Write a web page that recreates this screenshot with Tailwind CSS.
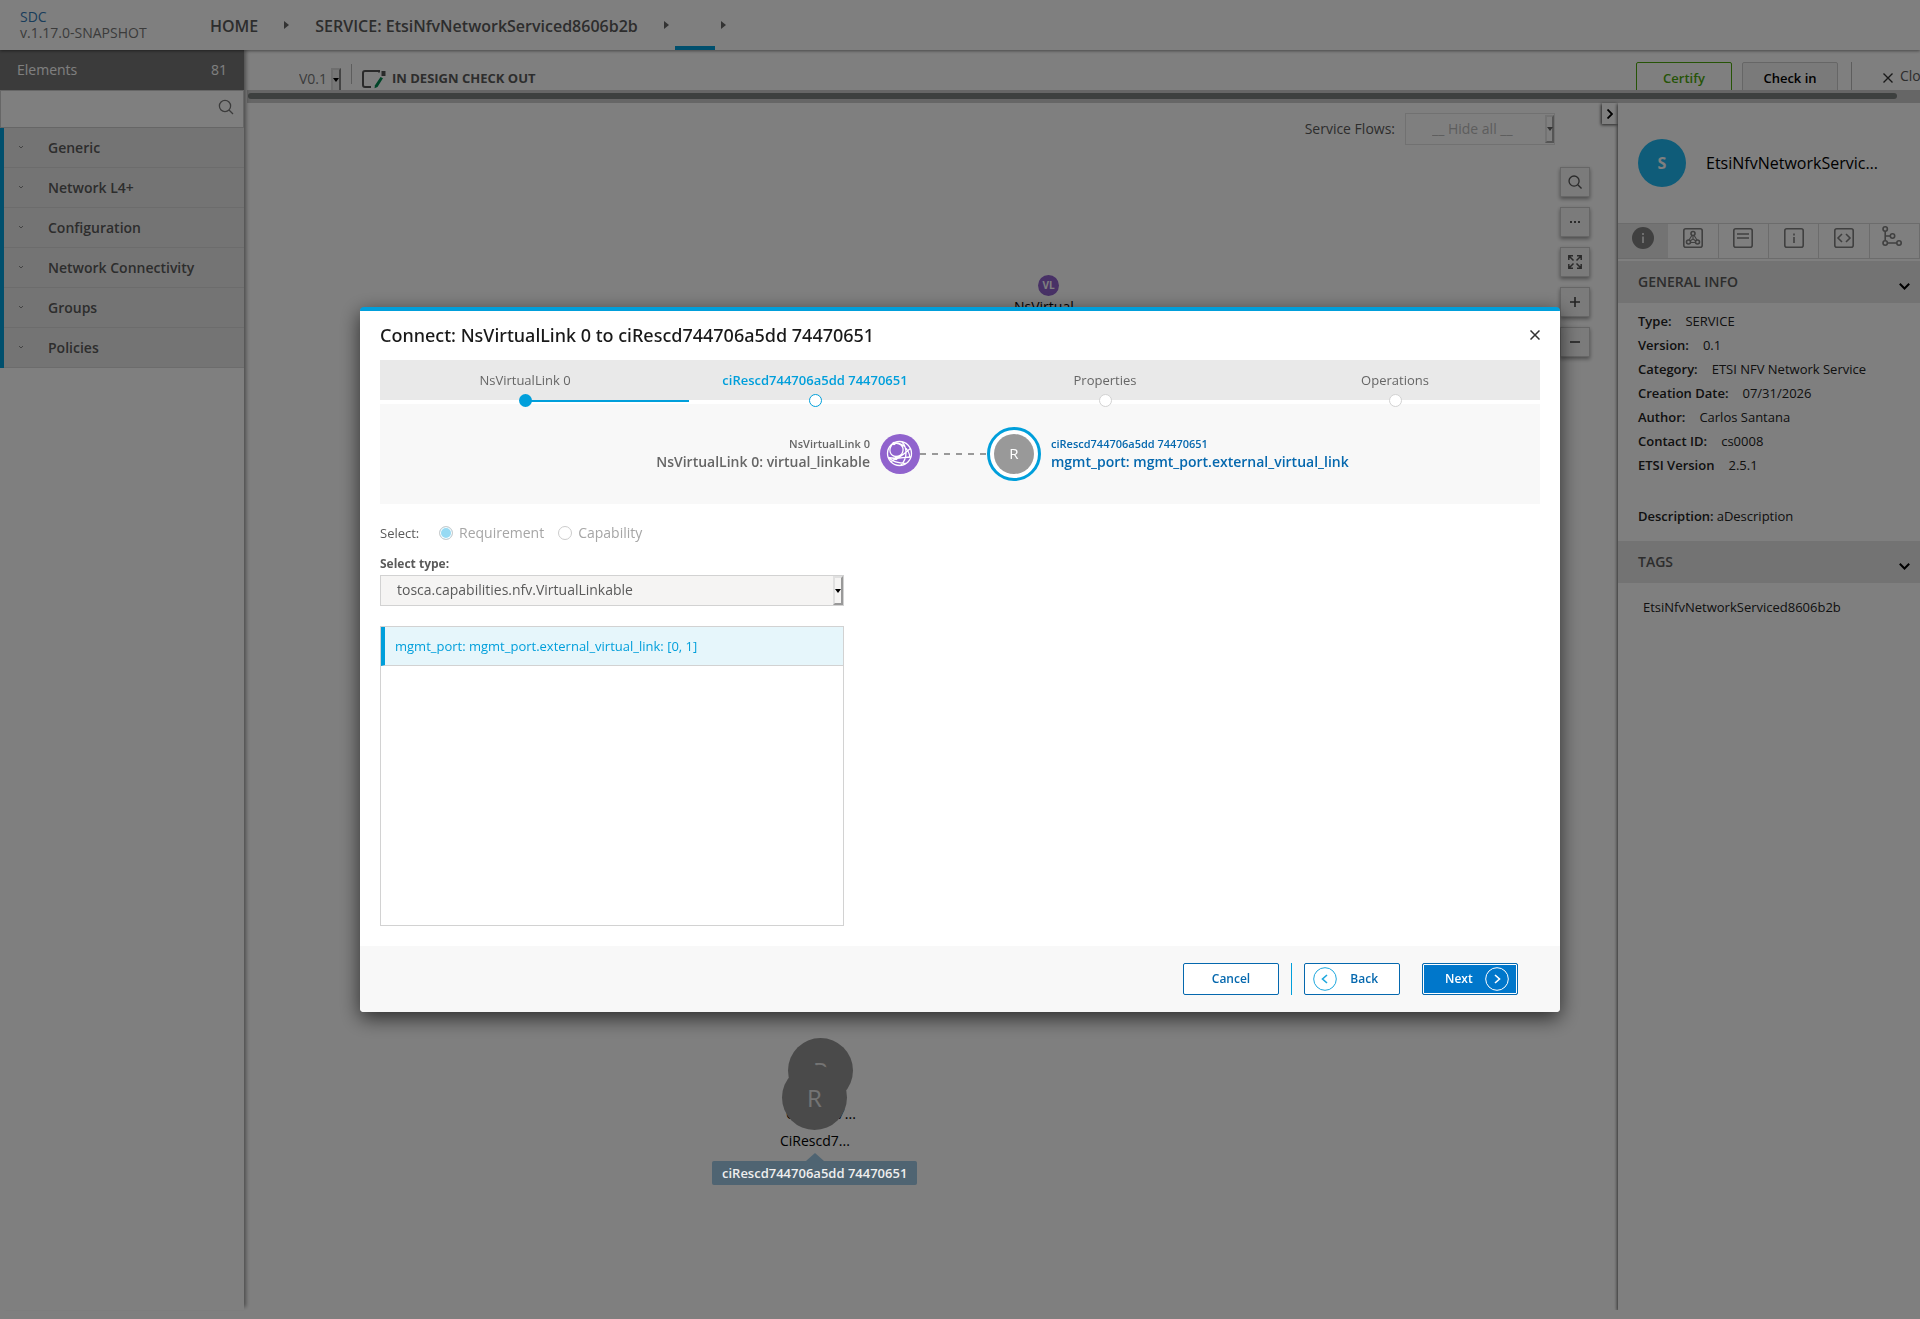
<!DOCTYPE html>
<html lang="en">
<head>
  <meta charset="UTF-8" />
  <meta name="viewport" content="width=device-width, initial-scale=1" />
  <title>SDC - Composition</title>
  <script src="https://cdn.jsdelivr.net/npm/@tailwindcss/browser@4"></script>
</head>
<body class="bg-white font-['Open_Sans',sans-serif] text-sm text-[#5a5a5a] h-screen flex flex-col overflow-hidden">

  <!-- Top navigation -->
  <header class="relative z-10 h-[50px] shrink-0 flex items-center bg-white shadow-[0_1px_3px_rgba(0,0,0,0.45)]">
    <div class="w-[210px] pl-5 leading-4">
      <a href="#" class="block text-[#337ab7]">SDC</a>
      <div class="text-[#777]">v.1.17.0-SNAPSHOT</div>
    </div>
    <nav class="flex items-center h-full text-base font-semibold">
      <a href="#" class="pt-px">HOME</a>
      <span class="w-[57px] flex justify-center"><svg class="w-[5px] h-2" viewBox="0 0 5 8"><path d="M0 0l5 4-5 4z" fill="#666" /></svg></span>
      <a href="#" class="pt-px">SERVICE: EtsiNfvNetworkServiced8606b2b</a>
      <span class="w-[37px] pl-[26px]"><svg class="w-[5px] h-2" viewBox="0 0 5 8"><path d="M0 0l5 4-5 4z" fill="#666" /></svg></span>
      <span class="w-10 h-full border-b-4 border-[#009fdb]"></span>
      <span class="pl-[6px]"><svg class="w-[5px] h-2" viewBox="0 0 5 8"><path d="M0 0l5 4-5 4z" fill="#666" /></svg></span>
    </nav>
  </header>

  <div class="flex flex-1 min-h-0 pb-[9px]">
    <!-- Palette -->
    <aside class="relative w-[244px] shrink-0 bg-white shadow-[3px_-2px_4px_-1px_rgba(0,0,0,0.4)]">
      <div class="h-10 px-[17px] flex items-center justify-between bg-[#777] text-white pb-px">
        <span>Elements</span><span>81</span>
      </div>
      <div class="relative h-[38px] border border-[#ccc]">
        <input type="text" aria-label="Search elements" class="w-full h-full pl-3 pr-10 outline-none" />
        <svg class="absolute right-[9px] top-2 w-4 h-4" viewBox="0 0 16 16" fill="none" stroke="#777" stroke-width="1.3"><circle cx="7" cy="7" r="5.6" /><path d="M11 11l4 4" /></svg>
      </div>
      <ul class="border-l-4 border-[#009fdb] font-semibold">
        <li class="h-10 flex items-center bg-[#e9e9e9] border-b border-[#d8d8d8]"><svg class="ml-[15px] mr-[25px] w-1 h-[3px]" viewBox="0 0 4 3" fill="none" stroke="#888"><path d="M0 0l2 2 2-2" /></svg>Generic</li>
        <li class="h-10 flex items-center bg-[#e9e9e9] border-b border-[#d8d8d8]"><svg class="ml-[15px] mr-[25px] w-1 h-[3px]" viewBox="0 0 4 3" fill="none" stroke="#888"><path d="M0 0l2 2 2-2" /></svg>Network L4+</li>
        <li class="h-10 flex items-center bg-[#e9e9e9] border-b border-[#d8d8d8]"><svg class="ml-[15px] mr-[25px] w-1 h-[3px]" viewBox="0 0 4 3" fill="none" stroke="#888"><path d="M0 0l2 2 2-2" /></svg>Configuration</li>
        <li class="h-10 flex items-center bg-[#e9e9e9] border-b border-[#d8d8d8]"><svg class="ml-[15px] mr-[25px] w-1 h-[3px]" viewBox="0 0 4 3" fill="none" stroke="#888"><path d="M0 0l2 2 2-2" /></svg>Network Connectivity</li>
        <li class="h-10 flex items-center bg-[#e9e9e9] border-b border-[#d8d8d8]"><svg class="ml-[15px] mr-[25px] w-1 h-[3px]" viewBox="0 0 4 3" fill="none" stroke="#888"><path d="M0 0l2 2 2-2" /></svg>Groups</li>
        <li class="h-10 flex items-center bg-[#e9e9e9] border-b border-[#d8d8d8]"><svg class="ml-[15px] mr-[25px] w-1 h-[3px]" viewBox="0 0 4 3" fill="none" stroke="#888"><path d="M0 0l2 2 2-2" /></svg>Policies</li>
      </ul>
    </aside>

    <main class="flex-1 min-w-0 flex flex-col pl-[3px]">
      <!-- Workspace toolbar -->
      <div class="h-10 shrink-0 overflow-hidden">
        <div class="flex items-start pt-3 pl-[52px] w-[calc(100%+40px)]">
          <div class="flex items-start pt-[6px]">
            <select aria-label="Version" class="appearance-none w-8 leading-[22px] outline-none text-[#777]"><option>V0.1</option></select>
            <span aria-hidden="true" class="w-[10px] h-6 bg-[#eee] border-2 border-t-[#ddd] border-l-[#ddd] border-r-[#888] border-b-[#888] flex items-center justify-center"><svg class="w-[6px] h-1 shrink-0" viewBox="0 0 6 4"><path d="M0 0h6l-3 4z" fill="#000" /></svg></span>
          </div>
          <span class="ml-[10px] mt-[2px] h-5 w-px bg-[#bbb]"></span>
          <svg class="ml-[10px] mt-[8px] w-6 h-[19px]" viewBox="0 0 24 19" fill="none"><path d="M17 2.500V1H3Q1 1 1 3v12q0 2 2 2h6" stroke="#555" stroke-width="2" /><path d="M19.500 1h4v5h-4z" fill="#555" /><path d="M18.500 7l2.500 1.200-5.500 8.800-3 1.200.5-3z" fill="#008a50" /></svg>
          <span class="ml-[6px] mt-[7px] text-[13px] leading-[18px] font-bold">IN DESIGN CHECK OUT</span>
          <div class="ml-auto flex items-start text-[13px]">
            <button type="button" class="w-24 h-8 border border-[#4ca90c] rounded-xs text-[#4ca90c] font-semibold">Certify</button>
            <button type="button" class="ml-[10px] w-24 h-8 border border-[#ccc] bg-[#f5f5f5] rounded-xs text-black font-semibold">Check in</button>
            <span class="ml-[13px] h-8 w-px bg-[#bbb]"></span>
            <button type="button" class="ml-[31px] flex items-center gap-[7px] text-sm w-[77px] whitespace-nowrap leading-[28px]"><svg class="w-[10px] h-[10px] mt-[3px] shrink-0" viewBox="0 0 10 10" stroke="#333" stroke-width="1.4"><path d="M.5.500l9 9M9.500.500l-9 9" /></svg>Close</button>
          </div>
        </div>
      </div>
      <div class="h-[13px] shrink-0 bg-[#ccc] pt-[3px] pl-px pr-[23px]"><div class="h-[6px] rounded-full bg-[#7b807e]"></div></div>

      <div class="flex flex-1 min-h-0">
        <!-- Composition canvas -->
        <section class="relative flex-1 min-w-0">
          <div class="absolute right-[63px] top-[10px] flex items-center gap-[10px]">
            <label for="flows">Service Flows:</label>
            <span class="relative block w-[150px] h-8">
              <select id="flows" disabled class="appearance-none w-full h-full border border-[#e2e2e2] pl-[26px] text-[#bbb] opacity-100"><option>__ Hide all __</option></select>
              <span aria-hidden="true" class="absolute right-px top-[2px] w-[9px] h-7 border-2 border-t-[#e6e6e6] border-l-[#e6e6e6] border-r-[#aaa] border-b-[#aaa] flex items-center justify-center"><svg class="w-[6px] h-1 shrink-0" viewBox="0 0 6 4"><path d="M0 0h6l-3 4z" fill="#666" /></svg></span>
            </span>
          </div>
          <button type="button" aria-label="Toggle panel" class="absolute right-0 top-0 w-4 h-[21px] bg-white flex items-center justify-center shadow-[-1px_1px_3px_rgba(0,0,0,0.7)]"><svg class="w-[6px] h-[10px]" viewBox="0 0 6 10" fill="none" stroke="#000" stroke-width="1.8"><path d="M.5.500L5 5 .5 9.500" /></svg></button>

          <div class="absolute right-7 top-16 flex flex-col gap-[10px]">
            <button type="button" aria-label="Search" class="w-[30px] h-[30px] flex items-center justify-center bg-[#f6f6f6] border border-[#ccc] shadow-[0_2px_4px_rgba(0,0,0,0.4)]"><svg class="w-[14px] h-[14px]" viewBox="0 0 15 15" fill="none" stroke="#555" stroke-width="1.4"><circle cx="6.500" cy="6.500" r="5.400" /><path d="M10.500 10.500l4 4" /></svg></button>
            <button type="button" aria-label="More" class="w-[30px] h-[30px] flex items-center justify-center bg-[#f6f6f6] border border-[#ccc] shadow-[0_2px_4px_rgba(0,0,0,0.4)]"><svg class="w-[10px] h-[2px]" viewBox="0 0 10 2" fill="#555"><path d="M0 0h2v2H0zM4 0h2v2H4zM8 0h2v2H8z" /></svg></button>
            <button type="button" aria-label="Fit" class="w-[30px] h-[30px] flex items-center justify-center bg-[#f6f6f6] border border-[#ccc] shadow-[0_2px_4px_rgba(0,0,0,0.4)]"><svg class="w-[14px] h-[14px]" viewBox="0 0 14 14" fill="none" stroke="#555" stroke-width="1.500"><path d="M.8 5V.8H5M9 .8h4.200V5M13.200 9v4.200H9M5 13.200H.8V9M1 1l4.500 4.500M13 1L8.500 5.500M13 13L8.500 8.500M1 13l4.500-4.500" /></svg></button>
            <button type="button" aria-label="Zoom in" class="w-[30px] h-[30px] flex items-center justify-center bg-[#f6f6f6] border border-[#ccc] shadow-[0_2px_4px_rgba(0,0,0,0.4)]"><svg class="w-[10px] h-[10px]" viewBox="0 0 10 10" stroke="#444" stroke-width="1.600"><path d="M5 0v10M0 5h10" /></svg></button>
            <button type="button" aria-label="Zoom out" class="w-[30px] h-[30px] flex items-center justify-center bg-[#f6f6f6] border border-[#ccc] shadow-[0_2px_4px_rgba(0,0,0,0.4)]"><svg class="w-[10px] h-[10px]" viewBox="0 0 10 10" stroke="#444" stroke-width="1.600"><path d="M0 5h10" /></svg></button>
          </div>

          <!-- Graph nodes -->
          <div class="absolute left-[791px] top-[172px] w-[21px] h-[21px] rounded-full bg-[#9063cd] text-white text-[10px] font-bold flex items-center justify-center">VL</div>
          <div class="absolute left-[767px] top-[194px] text-black">NsVirtual...</div>
          <div class="absolute left-[539px] top-[1001px] text-black">CiRescd7...</div>
          <div class="absolute left-[541px] top-[935px] w-[65px] h-[65px] rounded-full bg-[#959595] text-[#e8e8e8] text-2xl flex items-center justify-center">R</div>
          <div class="absolute left-[535px] top-[962px] w-[65px] h-[65px] rounded-full bg-[#959595] text-[#e8e8e8] text-2xl flex items-center justify-center">R</div>
          <div class="absolute left-[533px] top-[1028px] text-black">CiRescd7...</div>
        </section>

        <!-- Details panel -->
        <aside class="w-[302px] shrink-0 bg-white text-[13px] text-[#222] shadow-[-1px_1px_3px_rgba(0,0,0,0.6)] relative [clip-path:inset(0_0_0_-6px)]">
          <div class="h-[120px] pl-5 flex items-center gap-5">
            <span class="w-12 h-12 rounded-full bg-[#1eb9f3] text-white text-base font-bold flex items-center justify-center">S</span>
            <span class="w-[172px] truncate text-base text-black">EtsiNfvNetworkServiced8606b2b</span>
          </div>
          <div class="grid grid-cols-6 h-9 border-y border-[#d8d8d8]">
            <button type="button" aria-label="General" class="flex justify-center pt-[3px] bg-[#e6e6e6]"><svg class="w-[22px] h-[22px]" viewBox="0 0 22 22"><circle cx="11" cy="11" r="11" fill="#808080" /><path d="M10 6h2v2h-2zM10 9.500h2V16h-2z" fill="#ddd" /></svg></button>
            <button type="button" aria-label="Composition" class="flex justify-center pt-1 border-r border-[#d8d8d8]"><svg class="w-5 h-5" viewBox="0 0 20 20" fill="none" stroke="#808080" stroke-width="1.600"><rect x=".8" y=".8" width="18.400" height="18.400" rx="2" /><circle cx="10" cy="5.500" r="2" /><circle cx="5.500" cy="14" r="2" /><circle cx="14.500" cy="14" r="2" /><path d="M9 7.300L6 12M11 7.300l3 4.700M7.500 14.500h5M10 7.500V11l-3 2M10 11l3 2" stroke-width="1.100" /></svg></button>
            <button type="button" aria-label="Deployment" class="flex justify-center pt-1 border-r border-[#d8d8d8]"><svg class="w-5 h-5" viewBox="0 0 20 20" fill="none" stroke="#808080" stroke-width="1.600"><rect x=".8" y=".8" width="18.400" height="18.400" rx="2" /><path d="M4 6h12M4 10h12" /></svg></button>
            <button type="button" aria-label="Information" class="flex justify-center pt-1 border-r border-[#d8d8d8]"><svg class="w-5 h-5" viewBox="0 0 20 20" fill="none" stroke="#808080" stroke-width="1.600"><rect x=".8" y=".8" width="18.400" height="18.400" rx="2" /><path d="M10 5.500v2M10 9v6" /></svg></button>
            <button type="button" aria-label="API" class="flex justify-center pt-1 border-r border-[#d8d8d8]"><svg class="w-5 h-5" viewBox="0 0 20 20" fill="none" stroke="#808080" stroke-width="1.600"><rect x=".8" y=".8" width="18.400" height="18.400" rx="2" /><path d="M8 6l-4 4 4 4M12 6l4 4-4 4" /></svg></button>
            <button type="button" aria-label="Dependencies" class="flex justify-center pt-[2px] pr-1 border-r border-[#d8d8d8]"><svg class="w-5 h-5" viewBox="0 0 20 20" fill="none" stroke="#808080" stroke-width="1.600"><circle cx="3.200" cy="3" r="2.200" /><circle cx="3.200" cy="17" r="2.200" /><circle cx="10.500" cy="10" r="2.200" /><circle cx="17" cy="17" r="2.200" /><path d="M3.200 5.200v9.600M5.400 17h9.400M3.500 10h4.800" /></svg></button>
          </div>
          <h2 class="mt-[2px] h-[42px] pl-5 pr-[10px] flex items-center justify-between bg-[#e6e6e6] text-sm font-semibold text-[#5a5a5a]">GENERAL INFO<svg class="w-[11px] h-[7px] mt-2" viewBox="0 0 11 7" fill="none" stroke="#000" stroke-width="2"><path d="M.8.800l4.700 4.700L10.200.8" /></svg></h2>
          <dl class="pt-[6px] pl-5 leading-[18px]">
            <div class="flex gap-[14px] py-[3px]"><dt class="font-semibold">Type:</dt><dd>SERVICE</dd></div>
            <div class="flex gap-[14px] py-[3px]"><dt class="font-semibold">Version:</dt><dd>0.1</dd></div>
            <div class="flex gap-[14px] py-[3px]"><dt class="font-semibold">Category:</dt><dd>ETSI NFV Network Service</dd></div>
            <div class="flex gap-[14px] py-[3px]"><dt class="font-semibold">Creation Date:</dt><dd>07/31/2026</dd></div>
            <div class="flex gap-[14px] py-[3px]"><dt class="font-semibold">Author:</dt><dd>Carlos Santana</dd></div>
            <div class="flex gap-[14px] py-[3px]"><dt class="font-semibold">Contact ID:</dt><dd>cs0008</dd></div>
            <div class="flex gap-[14px] py-[3px]"><dt class="font-semibold">ETSI Version</dt><dd>2.5.1</dd></div>
            <div class="flex gap-[3px] pt-[30px] pb-4"><dt class="font-semibold">Description:</dt><dd>aDescription</dd></div>
          </dl>
          <h2 class="h-[42px] pl-5 pr-[10px] flex items-center justify-between bg-[#e6e6e6] text-sm font-semibold text-[#5a5a5a]">TAGS<svg class="w-[11px] h-[7px] mt-2" viewBox="0 0 11 7" fill="none" stroke="#000" stroke-width="2"><path d="M.8.800l4.700 4.700L10.200.8" /></svg></h2>
          <p class="pt-[15px] pl-[25px]">EtsiNfvNetworkServiced8606b2b</p>
        </aside>
      </div>
    </main>
  </div>

  <!-- Connection wizard -->
  <div class="fixed inset-0 z-20 flex items-center justify-center bg-black/50">
    <div role="dialog" aria-labelledby="wizardTitle" class="w-[1200px] max-w-full bg-white rounded border-t-4 border-[#009fdb] shadow-[0_6px_20px_rgba(0,0,0,0.65)]">
      <div class="h-[49px] px-5 pb-[2px] flex items-center justify-between">
        <h1 id="wizardTitle" class="font-['Noto_Sans',sans-serif] text-lg text-[#191919] font-medium">Connect: NsVirtualLink 0 to ciRescd744706a5dd 74470651</h1>
        <button type="button" aria-label="Close" class="w-[10px] h-[10px]"><svg class="w-[10px] h-[10px]" viewBox="0 0 10 10" stroke="#333" stroke-width="1.500"><path d="M.5.500l9 9M9.500.500l-9 9" /></svg></button>
      </div>

      <div class="px-5">
        <ol class="relative grid grid-cols-4 h-11 bg-[#e9e9e9] border-b-4 border-white text-[13px] text-center text-[#666]">
          <li class="relative pt-[11px]">NsVirtualLink 0
            <span class="absolute left-1/2 -bottom-[2px] h-[2px] w-[164px] bg-[#009fdb]"></span>
            <span class="absolute left-1/2 -bottom-[7px] -ml-[6px] w-[13px] h-[13px] rounded-full bg-[#009fdb]"></span></li>
          <li class="relative pt-[11px] font-semibold text-[#009fdb]">ciRescd744706a5dd 74470651
            <span class="absolute left-1/2 -bottom-[7px] -ml-[6px] w-[13px] h-[13px] rounded-full bg-white border border-[#009fdb]"></span></li>
          <li class="relative pt-[11px]">Properties
            <span class="absolute left-1/2 -bottom-[7px] -ml-[6px] w-[13px] h-[13px] rounded-full bg-white border border-[#d2d2d2]"></span></li>
          <li class="relative pt-[11px]">Operations
            <span class="absolute left-1/2 -bottom-[7px] -ml-[6px] w-[13px] h-[13px] rounded-full bg-white border border-[#d2d2d2]"></span></li>
        </ol>

        <div class="h-[100px] flex items-center bg-[#f8f8f8] font-semibold">
          <div class="w-[490px] text-right text-[#666]">
            <div class="text-[11px] leading-4">NsVirtualLink 0</div>
            <div class="leading-5">NsVirtualLink 0: virtual_linkable</div>
          </div>
          <svg class="ml-[10px] w-10 h-10" viewBox="0 0 40 40" fill="none" stroke="#fff" stroke-width="1.300">
            <circle cx="20" cy="20" r="20" fill="#9063cd" stroke="none" />
            <circle cx="19.500" cy="19.500" r="12" />
            <path d="M12 10.500C8 16 10 22 16 22.500C23 22.500 25 15 21 11C18 8.500 15 9 12 10.500M14 9C21 8 29 14 30 24M22 8C27 13 28 24 21 31M8 23.500C11 23.500 13 24.500 16 24.500C22 24 27 23 31 23M16 24.500C21 23 26 18 30.500 14.500M9 24C12 27 17 29 26 29.500M11 27.500C13 26 15 25 16 24.500" />
            <circle cx="14" cy="9.500" r="1" fill="#fff" /><circle cx="16" cy="24.500" r="1" fill="#fff" />
          </svg>
          <svg class="w-[67px] h-[2px]" viewBox="0 0 67 2"><path d="M0 1h67" stroke="#999" stroke-width="2" stroke-dasharray="6 6" /></svg>
          <div class="w-[54px] h-[54px] rounded-full bg-white border-3 border-[#009fdb] flex items-center justify-center">
            <span class="w-10 h-10 rounded-full bg-[#999] text-white text-[15px] font-normal flex items-center justify-center">R</span>
          </div>
          <div class="ml-[10px] text-[#0568ae]">
            <div class="text-[11px] leading-4">ciRescd744706a5dd 74470651</div>
            <div class="leading-5">mgmt_port: mgmt_port.external_virtual_link</div>
          </div>
        </div>

        <div role="radiogroup" aria-labelledby="selectLabel" class="pt-[18px] h-10 flex items-center text-[#a6a6a6]">
          <span id="selectLabel" class="w-[59px] text-[13px] text-[#5a5a5a]">Select:</span>
          <input type="radio" id="req" name="kind" checked disabled class="appearance-none w-[14px] h-[14px] rounded-full border border-[#ccc] bg-white checked:bg-[#97daf3] checked:shadow-[inset_0_0_0_1px_#fff]" />
          <label for="req" class="ml-[6px] mr-[14px]">Requirement</label>
          <input type="radio" id="cap" name="kind" disabled class="appearance-none w-[14px] h-[14px] rounded-full border border-[#ccc] bg-white" />
          <label for="cap" class="ml-[6px]">Capability</label>
        </div>

        <div class="w-[464px] max-w-full pt-3">
          <label for="type" class="block text-xs leading-4 font-bold mb-[3px]">Select type:</label>
          <div class="relative h-[31px]">
            <select id="type" class="appearance-none w-full h-full px-4 pb-[2px] bg-[#f5f4f3] border border-[#d2d2d2] outline-none"><option>tosca.capabilities.nfv.VirtualLinkable</option></select>
            <span aria-hidden="true" class="absolute right-px top-px w-[10px] h-[29px] bg-[#f5f4f3] border-2 border-t-[#e0e0e0] border-l-[#e0e0e0] border-r-[#999] border-b-[#999] flex items-center justify-center"><svg class="w-[6px] h-1 shrink-0" viewBox="0 0 6 4"><path d="M0 0h6l-3 4z" fill="#000" /></svg></span>
          </div>
          <ul class="mt-5 h-[300px] border border-[#d2d2d2] text-[13px]">
            <li class="h-[39px] pl-[10px] flex items-center bg-[#e6f6fb] text-[#009fdb] border-b border-b-[#d2d2d2] border-l-4 border-l-[#009fdb]">mgmt_port: mgmt_port.external_virtual_link: [0, 1]</li>
          </ul>
        </div>
      </div>

      <div class="mt-5 h-[66px] pr-[42px] flex items-center justify-end rounded-b bg-[#f8f8f8] text-xs font-semibold text-[#0568ae]">
        <button type="button" class="w-24 h-8 bg-white border border-[#0568ae] rounded-xs">Cancel</button>
        <span class="mx-3 w-px h-8 bg-[#009fdb]"></span>
        <button type="button" class="w-24 h-8 pl-2 pr-[21px] flex items-center justify-between bg-white border border-[#0568ae] rounded-xs"><svg class="w-6 h-6" viewBox="0 0 24 24" fill="none" stroke="#1ea7dd"><circle cx="12" cy="12" r="11.300" /><path d="M14 8l-4.500 4 4.500 4" stroke-width="1.600" /></svg>Back</button>
        <button type="button" class="ml-[22px] w-24 h-8 pl-[22px] pr-2 flex items-center justify-between bg-[#0077cb] text-white border border-[#0568ae] rounded-xs shadow-[inset_0_0_0_1px_#fff]">Next<svg class="w-6 h-6" viewBox="0 0 24 24" fill="none" stroke="#fff"><circle cx="12" cy="12" r="11.300" /><path d="M10 8l4.500 4-4.500 4" stroke-width="1.600" /></svg></button>
      </div>
    </div>
  </div>

  <!-- Node tooltip -->
  <div role="tooltip" class="absolute z-30 left-[712px] top-[1153px] flex flex-col items-center">
    <svg class="w-[18px] h-2" viewBox="0 0 18 8"><path d="M9 0l9 8H0z" fill="#4f6472" /></svg>
    <div class="h-6 px-[10px] bg-[#4f6472] rounded-xs text-[13px] leading-6 font-semibold text-[#eee] whitespace-nowrap">ciRescd744706a5dd 74470651</div>
  </div>
</body>
</html>
